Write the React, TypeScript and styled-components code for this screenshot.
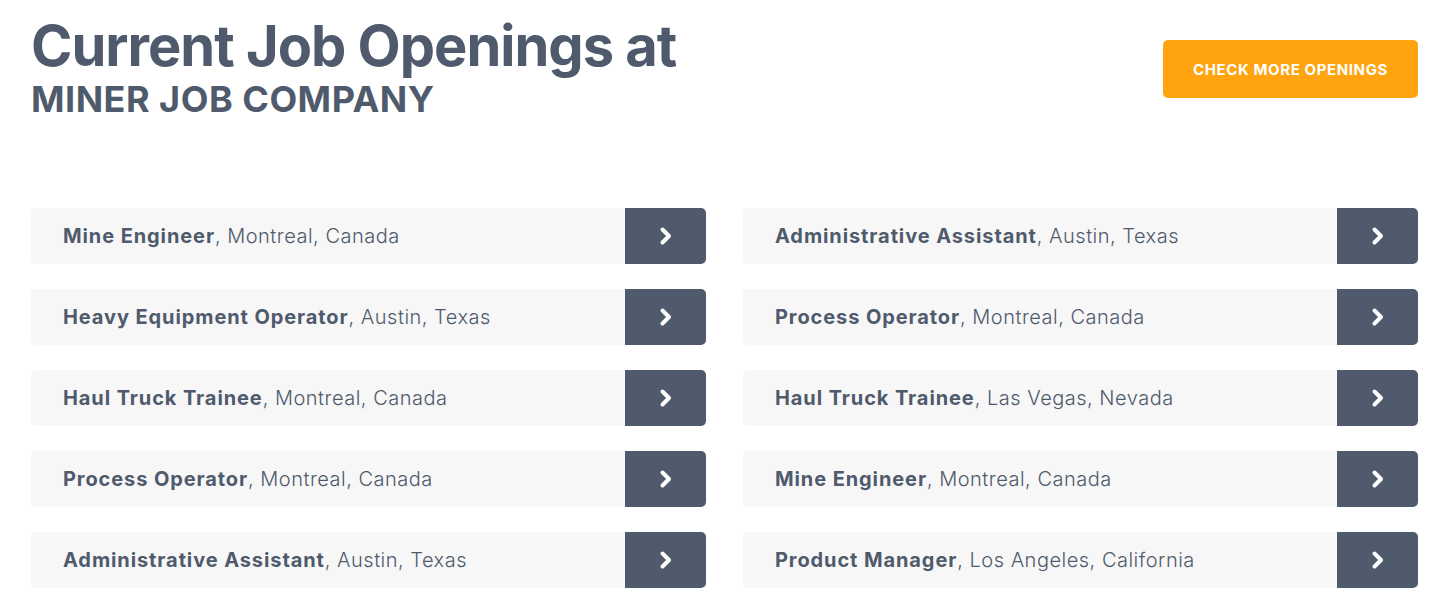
import styled, { createGlobalStyle } from "styled-components";

const jobs = [
  { title: "Mine Engineer", place: "Montreal, Canada" },
  { title: "Administrative Assistant", place: "Austin, Texas" },
  { title: "Heavy Equipment Operator", place: "Austin, Texas" },
  { title: "Process Operator", place: "Montreal, Canada" },
  { title: "Haul Truck Trainee", place: "Montreal, Canada" },
  { title: "Haul Truck Trainee", place: "Las Vegas, Nevada" },
  { title: "Process Operator", place: "Montreal, Canada" },
  { title: "Mine Engineer", place: "Montreal, Canada" },
  { title: "Administrative Assistant", place: "Austin, Texas" },
  { title: "Product Manager", place: "Los Angeles, California" },
];

function Chevron() {
  return (
    <svg width="14" height="20" viewBox="0 0 14 20" fill="none">
      <polyline points="3.5,3.5 10,10 3.5,16.5" stroke="#fff" strokeWidth="4" strokeLinecap="round" strokeLinejoin="round" />
    </svg>
  );
}

function App() {
  return (
    <>
      <GlobalStyle />
      <Page>
        <Header>
          <div>
            <Title>Current Job Openings at</Title>
            <Company>MINER JOB COMPANY</Company>
          </div>
          <MoreButton>CHECK MORE OPENINGS</MoreButton>
        </Header>
        <JobGrid>
          {jobs.map((job, i) => (
            <JobRow key={i}>
              <JobText>
                <strong>{job.title}</strong>, {job.place}
              </JobText>
              <ArrowButton aria-label="Open">
                <Chevron />
              </ArrowButton>
            </JobRow>
          ))}
        </JobGrid>
      </Page>
    </>
  );
}

const GlobalStyle = createGlobalStyle`
  body {
    margin: 0;
    background: #fff;
    font-family: Inter, "Open Sans", sans-serif;
    color: #4f5b6d;
  }
`;

const Page = styled.div`
  padding: 15px 35px 0 31px;
`;

const Header = styled.header`
  display: flex;
  justify-content: space-between;
  align-items: flex-start;
`;

const Title = styled.h1`
  margin: 0;
  font-size: 56px;
  line-height: 62px;
  font-weight: 700;
  letter-spacing: -1px;
  color: #4f5b6d;
`;

const Company = styled.h2`
  margin: 0;
  font-size: 36px;
  line-height: 44px;
  font-weight: 700;
  letter-spacing: 0.5px;
  color: #4f5b6d;
`;

const MoreButton = styled.button`
  margin-top: 25px;
  width: 255px;
  height: 58px;
  border: 0;
  border-radius: 5px;
  background: #ffa40f;
  color: #fff;
  font-family: inherit;
  font-size: 15px;
  font-weight: 700;
  letter-spacing: 0.6px;
  cursor: pointer;
`;

const JobGrid = styled.div`
  display: grid;
  grid-template-columns: 1fr 1fr;
  column-gap: 37px;
  row-gap: 25px;
  margin-top: 87px;
`;

const JobRow = styled.div`
  display: flex;
  align-items: stretch;
  height: 56px;
  border-radius: 5px;
  background: #f7f7f7;
  overflow: hidden;
`;

const JobText = styled.p`
  flex: 1;
  margin: 0;
  padding-left: 32px;
  display: flex;
  align-items: center;
  white-space: pre;
  font-size: 20px;
  font-weight: 300;
  letter-spacing: 0.5px;
  color: #4f5b6d;

  strong {
    font-weight: 700;
    letter-spacing: 0.9px;
  }
`;

const ArrowButton = styled.button`
  width: 81px;
  border: 0;
  padding: 0;
  background: #4f5b6d;
  display: flex;
  align-items: center;
  justify-content: center;
  cursor: pointer;
`;

export default App;
